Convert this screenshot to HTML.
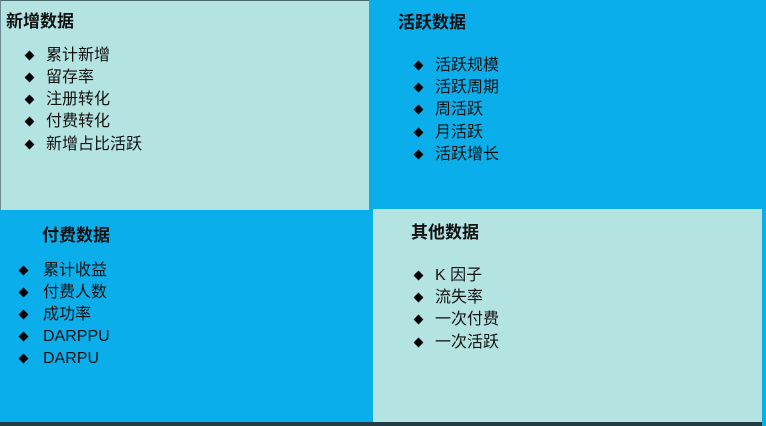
<!DOCTYPE html>
<html><head><meta charset="utf-8"><style>
html,body{margin:0;padding:0}
body{width:766px;height:426px;position:relative;overflow:hidden;background:#0aaeea;font-family:"Liberation Sans","Noto Sans CJK SC",sans-serif;color:#111}
.box{position:absolute;background:#b4e4e2}
.t{position:absolute;font-weight:bold;font-size:17px;line-height:20px;white-space:nowrap}
.i{position:absolute;font-size:16px;line-height:20px;white-space:nowrap}
.b{position:absolute;width:7px;height:7px;background:#000;transform:rotate(45deg)}
</style></head><body>
<div class="box" style="left:0;top:0;width:369px;height:210px;border-top:1px solid #4a6a70;border-left:1px solid #6a8a90;box-sizing:border-box"></div>
<div class="box" style="left:373px;top:209px;width:389px;height:213px"></div>
<div style="position:absolute;left:0;top:422px;width:766px;height:4px;background:#243c44"></div>
<div style="position:absolute;left:762px;top:0;width:4px;height:426px;background:#0aaeea"></div>

<div class="t" style="left:6px;top:12px">新增数据</div>
<div class="b" style="left:26px;top:52px"></div><div class="i" style="left:46px;top:46px">累计新增</div>
<div class="b" style="left:26px;top:74px"></div><div class="i" style="left:46px;top:68px">留存率</div>
<div class="b" style="left:26px;top:96px"></div><div class="i" style="left:46px;top:90px">注册转化</div>
<div class="b" style="left:26px;top:118px"></div><div class="i" style="left:46px;top:112px">付费转化</div>
<div class="b" style="left:26px;top:141px"></div><div class="i" style="left:46px;top:135px">新增占比活跃</div>

<div class="t" style="left:398px;top:13px">活跃数据</div>
<div class="b" style="left:415px;top:62px"></div><div class="i" style="left:435px;top:56px">活跃规模</div>
<div class="b" style="left:415px;top:84px"></div><div class="i" style="left:435px;top:78px">活跃周期</div>
<div class="b" style="left:415px;top:106px"></div><div class="i" style="left:435px;top:100px">周活跃</div>
<div class="b" style="left:415px;top:129px"></div><div class="i" style="left:435px;top:123px">月活跃</div>
<div class="b" style="left:415px;top:151px"></div><div class="i" style="left:435px;top:145px">活跃增长</div>

<div class="t" style="left:42px;top:226px">付费数据</div>
<div class="b" style="left:20px;top:267px"></div><div class="i" style="left:43px;top:261px">累计收益</div>
<div class="b" style="left:20px;top:289px"></div><div class="i" style="left:43px;top:283px">付费人数</div>
<div class="b" style="left:20px;top:311px"></div><div class="i" style="left:43px;top:305px">成功率</div>
<div class="b" style="left:20px;top:333px"></div><div class="i" style="left:43px;top:327px">DARPPU</div>
<div class="b" style="left:20px;top:355px"></div><div class="i" style="left:43px;top:349px">DARPU</div>

<div class="t" style="left:411px;top:223px">其他数据</div>
<div class="b" style="left:415px;top:272px"></div><div class="i" style="left:435px;top:266px">K 因子</div>
<div class="b" style="left:415px;top:294px"></div><div class="i" style="left:435px;top:288px">流失率</div>
<div class="b" style="left:415px;top:316px"></div><div class="i" style="left:435px;top:310px">一次付费</div>
<div class="b" style="left:415px;top:339px"></div><div class="i" style="left:435px;top:333px">一次活跃</div>
</body></html>
